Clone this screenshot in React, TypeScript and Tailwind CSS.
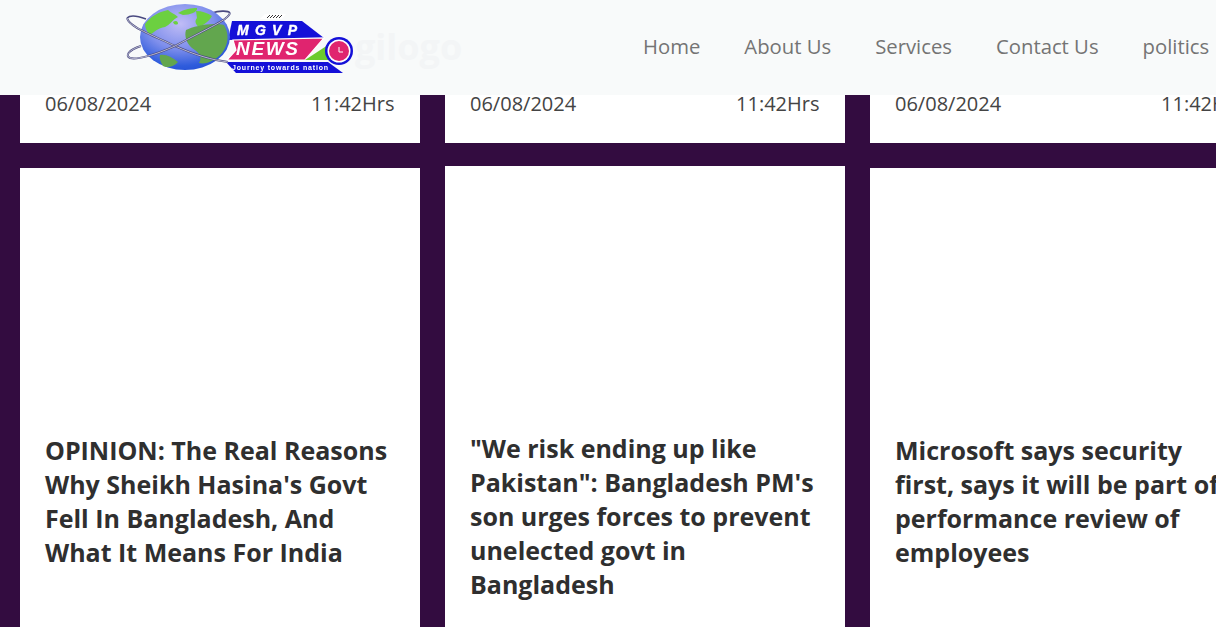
// News listing page - fixed header + three columns of cards

const navLinks = ['Home', 'About Us', 'Services', 'Contact Us', 'politics'];

const columns = [
  {
    secondTop: 'mt-[25px]',
    title: "OPINION: The Real Reasons Why Sheikh Hasina's Govt Fell In Bangladesh, And What It Means For India",
  },
  {
    secondTop: 'mt-[23px]',
    title: '"We risk ending up like Pakistan": Bangladesh PM\'s son urges forces to prevent unelected govt in Bangladesh',
  },
  {
    secondTop: 'mt-[25px]',
    title: 'Microsoft says security first, says it will be part of performance review of employees',
  },
];

function Logo() {
  return (
    <svg width="240" height="80" viewBox="125 0 240 80" className="shrink-0 blur-[0.4px]">
      <defs>
        <radialGradient id="sea" cx="0.45" cy="0.3" r="0.75">
          <stop offset="0" stopColor="#c0bcf6" />
          <stop offset="0.5" stopColor="#7f8fec" />
          <stop offset="0.85" stopColor="#2f5cdc" />
          <stop offset="1" stopColor="#2450d6" />
        </radialGradient>
      </defs>

      {/* banner */}
      <path d="M260 19 L265 14 L286 14 L282 19 Z" fill="#fff" />
      <path d="M267 18 L270 15 M270 18 L273 15 M273 18 L276 15 M276 18 L279 15 M279 18 L282 15" stroke="#333" strokeWidth="1" />
      <path d="M232 21 L302 21 L324 38 L228 40 Z" fill="#1410d8" />
      <path d="M233 40 L324 38 L305 60 L227 60 L236 50 Z" fill="#e0246f" stroke="#fff" strokeWidth="1.2" />
      <path d="M305 60 L328 45 L328 60 Z" fill="#6ccb2e" />
      <path d="M226 62 L328 62 L343 73 L236 73 Z" fill="#1410d8" />
      <text x="237" y="35" fill="#fff" stroke="#fff" strokeWidth="0.4" fontSize="14" fontWeight="700" fontStyle="italic" textLength="60" fontFamily="'Liberation Sans', sans-serif">MGVP</text>
      <text x="236" y="55" fill="#fff" fontSize="19" fontWeight="700" fontStyle="italic" textLength="62" fontFamily="'Liberation Sans', sans-serif">NEWS</text>
      <text x="232" y="70" fill="#fff" fontSize="7" fontWeight="700" textLength="96" fontFamily="'Liberation Sans', sans-serif">Journey towards nation</text>

      {/* clock */}
      <circle cx="339" cy="51" r="14" fill="#1410d8" />
      <circle cx="339" cy="51" r="11.5" fill="#fff" />
      <circle cx="339" cy="51" r="10" fill="#e0246f" />
      <path d="M339 47 V52 H343" stroke="#fff" strokeWidth="1" fill="none" />

      {/* orbit back halves */}
      <path d="M127 18 C130 15 138 16 146 19" fill="none" stroke="#4a4a80" strokeWidth="1.6" />
      <path d="M230 13 C228 10 218 11 212 13" fill="none" stroke="#4a4a80" strokeWidth="1.6" />

      {/* globe */}
      <ellipse cx="185" cy="37" rx="45" ry="33" fill="url(#sea)" />
      <path d="M145 24 C150 17 158 12 168 10 C171 13 175 14 178 17 C172 20 170 25 165 27 C158 28 154 32 150 35 C147 32 145 28 145 24 Z" fill="#6cd040" />
      <path d="M178 13 C184 9 192 8 197 8 C198 12 190 15 183 15 Z" fill="#6cd040" />
      <path d="M173 22 C176 20 178 21 178 24 C176 25 174 25 173 22 Z" fill="#6cd040" />
      <path d="M196 11 C202 11 208 13 212 16 C209 22 203 25 199 27 C196 25 194 21 197 18 Z" fill="#6cd040" />
      <path d="M186 30 C194 26 212 22 224 25 C229 33 229 44 222 53 C216 60 206 65 199 63 C203 56 198 52 192 48 C187 44 184 36 186 30 Z" fill="#62a64e" />
      <path d="M160 55 C166 54 172 57 178 62 C174 67 167 68 163 66 C161 62 159 59 160 55 Z" fill="#62a64e" />

      {/* orbit front halves */}
      <path d="M127 18 C129 26 145 32 175 46 C195 55 212 60 228 62" fill="none" stroke="#4a4a80" strokeWidth="2" />
      <path d="M127 18 C129 26 145 32 175 46 C195 55 212 60 228 62" fill="none" stroke="#e8e8f0" strokeWidth="0.7" />
      <path d="M230 13 C228 20 210 27 175 46 C155 55 137 60 130 58 C125 56 128 50 141 46" fill="none" stroke="#4a4a80" strokeWidth="2" />
      <path d="M230 13 C228 20 210 27 175 46 C155 55 137 60 130 58 C125 56 128 50 141 46" fill="none" stroke="#e8e8f0" strokeWidth="0.7" />
    </svg>
  );
}

export default function App() {
  return (
    <div className="w-[1216px] h-[627px] overflow-hidden bg-[#330c40] font-['Open_Sans',sans-serif]">
      <header className="h-[95px] bg-[#f8fafa] flex items-start pl-[125px] relative">
        <Logo />
        <span className="ml-[-10px] mt-[25px] text-[36px] leading-[44px] font-bold text-[#f3f5f6]">gilogo</span>
        <nav className="absolute left-[643px] top-[32px] flex gap-[44px] text-[20.3px] leading-[28px] text-[#747474] whitespace-nowrap">
          {navLinks.map((link) => (
            <a key={link}>{link}</a>
          ))}
        </nav>
      </header>

      <main className="flex gap-[25px] pl-[20px]">
        {columns.map((col, i) => (
          <div key={i} className="w-[400px] shrink-0">
            <div className="h-[48px] bg-white pl-[25px] pr-[25.5px] flex justify-between text-[20px] leading-[18px] text-[#444] whitespace-nowrap">
              <span>06/08/2024</span>
              <span>11:42Hrs</span>
            </div>
            <div className={`${col.secondTop} h-[470px] bg-white px-[25px] pt-[265px]`}>
              <h3 className="text-[25px] leading-[34px] font-bold text-[#2f2f2f]">{col.title}</h3>
            </div>
          </div>
        ))}
      </main>
    </div>
  );
}
